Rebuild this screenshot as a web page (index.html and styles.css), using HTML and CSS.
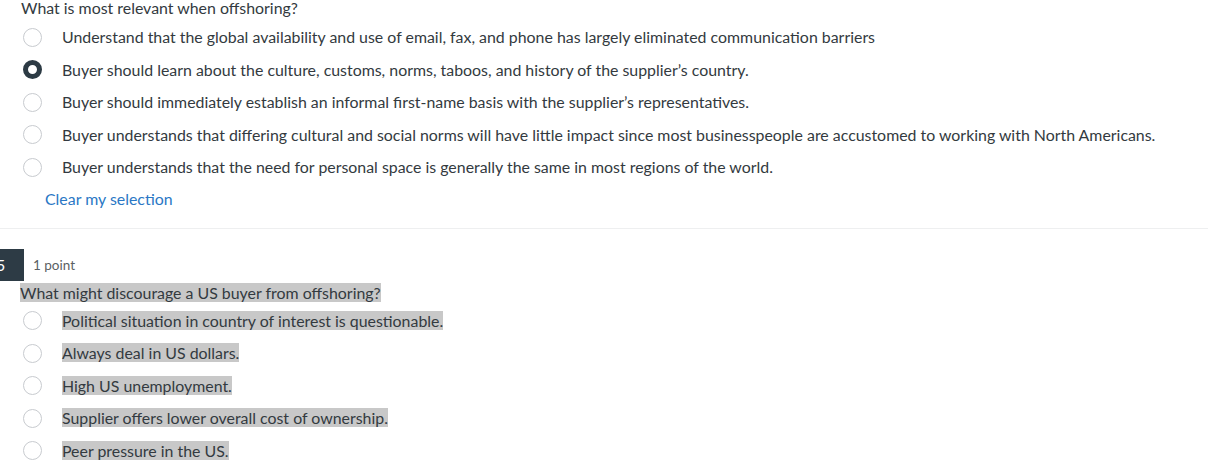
FILE: index.html
```html
<!DOCTYPE html>
<html>
<head>
<meta charset="utf-8">
<link rel="stylesheet" href="styles.css">
</head>
<body>
<div class="q q1">
  <div class="qtext">What is most relevant when offshoring?</div>
  <div class="opts">
    <div class="opt"><span class="radio"></span><span class="label">Understand that the global availability and use of email, fax, and phone has largely eliminated communication barriers</span></div>
    <div class="opt"><span class="radio on"></span><span class="label">Buyer should learn about the culture, customs, norms, taboos, and history of the supplier’s country.</span></div>
    <div class="opt"><span class="radio"></span><span class="label">Buyer should immediately establish an informal first-name basis with the supplier’s representatives.</span></div>
    <div class="opt"><span class="radio"></span><span class="label">Buyer understands that differing cultural and social norms will have little impact since most businesspeople are accustomed to working with North Americans.</span></div>
    <div class="opt"><span class="radio"></span><span class="label">Buyer understands that the need for personal space is generally the same in most regions of the world.</span></div>
  </div>
  <div class="clear">Clear my selection</div>
</div>
<div class="sep"></div>
<div class="q q2">
  <div class="head"><span class="num"><span class="digit">5</span></span><span class="pts">1 point</span></div>
  <div class="qtext"><span class="hl">What might discourage a US buyer from offshoring?</span></div>
  <div class="opts">
    <div class="opt"><span class="radio"></span><span class="label"><span class="hl">Political situation in country of interest is questionable.</span></span></div>
    <div class="opt"><span class="radio"></span><span class="label"><span class="hl">Always deal in US dollars.</span></span></div>
    <div class="opt"><span class="radio"></span><span class="label"><span class="hl">High US unemployment.</span></span></div>
    <div class="opt"><span class="radio"></span><span class="label"><span class="hl">Supplier offers lower overall cost of ownership.</span></span></div>
    <div class="opt"><span class="radio"></span><span class="label"><span class="hl">Peer pressure in the US.</span></span></div>
  </div>
</div>
</body>
</html>
```
FILE: styles.css
```css
html, body {
  margin: 0;
  padding: 0;
  background: #fff;
}
body {
  font-family: Lato, "Open Sans", sans-serif;
  font-size: 15.9px;
  color: #333a40;
  width: 1208px;
  height: 471px;
  overflow: hidden;
}
.q1 {
  padding-left: 21px;
  margin-top: -2px;
}
.qtext {
  line-height: 20px;
}
.opts {
  display: flex;
  flex-direction: column;
}
.opt {
  display: flex;
  align-items: center;
  height: 32.5px;
}
.q1 .opts {
  margin-top: 3px;
}
.radio {
  box-sizing: border-box;
  width: 19px;
  height: 19px;
  border-radius: 50%;
  border: 1px solid #c8cbcf;
  margin-left: 2px;
  margin-right: 20px;
  flex: none;
}
.radio.on {
  border: 5px solid #2c3a44;
}
.label {
  line-height: 20px;
}
.clear {
  color: #2a77c5;
  margin-left: 24px;
  line-height: 20px;
  margin-top: 5px;
}
.sep {
  margin-top: 19px;
  height: 1px;
  background: #eeeff0;
}
.q2 {
  padding-left: 21px;
}
.head {
  display: flex;
  align-items: center;
  margin-left: -21px;
  margin-top: 20px;
  height: 32px;
}
.num {
  width: 24px;
  height: 32px;
  background: #2d3b45;
  color: #fff;
  display: flex;
  align-items: center;
  overflow: hidden;
  font-size: 16px;
}
.digit {
  margin-left: -4px;
}
.pts {
  font-size: 13.5px;
  color: #5b5f63;
  margin-left: 9px;
}
.hl {
  background: #c8c8c8;
}
.q2 .qtext {
  margin-left: -1px;
  margin-top: 2px;
}
.q2 .opts {
  margin-top: 2px;
}
```
